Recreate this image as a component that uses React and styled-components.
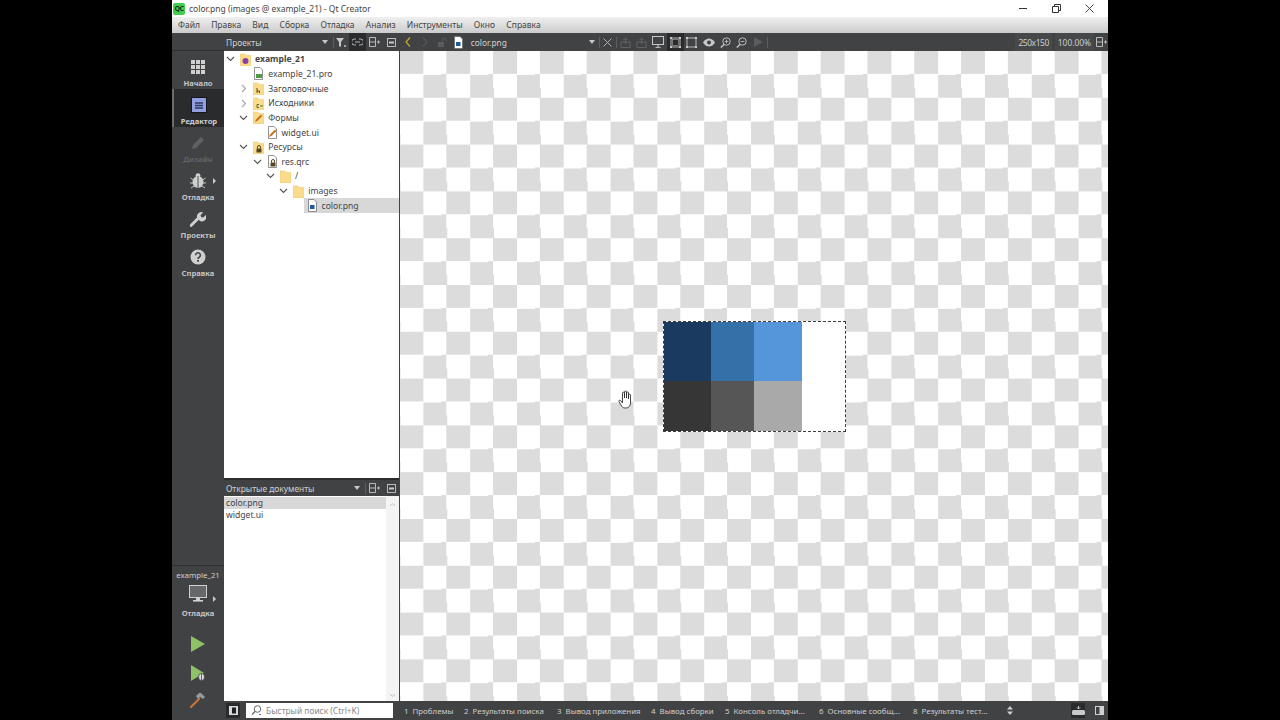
import React from "react";
import styled, { createGlobalStyle } from "styled-components";

const GlobalStyle = createGlobalStyle`
  html, body {
    margin: 0;
    padding: 0;
    background: #000;
    overflow: hidden;
  }
  * { box-sizing: border-box; }
`;

const FONT = `"Noto Sans", "Open Sans", sans-serif`;

const Page = styled.div`
  width: 1280px;
  height: 720px;
  background: #000;
  display: flex;
  justify-content: center;
  font-family: ${FONT};
`;

const Window = styled.div`
  width: 936px;
  height: 720px;
  display: flex;
  flex-direction: column;
  background: #fff;
`;

const TitleBar = styled.div`
  height: 17px;
  display: flex;
  align-items: center;
  background: #fff;
  color: #444;
  font-size: 8.5px;
  padding-left: 1px;
`;

const QtLogo = styled.div`
  width: 12px;
  height: 12px;
  border-radius: 2px;
  background: #41cd52;
  color: #12331a;
  font-size: 7px;
  font-weight: 700;
  line-height: 12px;
  text-align: center;
  letter-spacing: -0.4px;
  margin-right: 4px;
`;

const WindowControls = styled.div`
  margin-left: auto;
  display: flex;
  align-items: center;
  padding-right: 14px;
  gap: 24px;
  svg { display: block; }
`;

const MenuBar = styled.div`
  height: 16px;
  display: flex;
  align-items: center;
  padding: 0 0 1px 6px;
  gap: 11.2px;
  background: linear-gradient(#f0f0f0, #cbcbcb);
  color: #444;
  font-size: 8.5px;
`;

const Body = styled.div`
  flex: 1;
  display: flex;
  min-height: 0;
`;

const Sidebar = styled.div`
  width: 52px;
  display: flex;
  flex-direction: column;
  background: #404244;
`;

const SidebarCap = styled.div`
  height: 18px;
  border-bottom: 1px solid #2e2f30;
`;

const ModeButton = styled.div`
  height: 38px;
  position: relative;
  display: flex;
  flex-direction: column;
  align-items: center;
  padding-top: 7px;
  background: ${(p) => (p.$active ? "#2a2b2c" : "transparent")};
  border-left: ${(p) => (p.$active ? "2px solid #6b6d70" : "0")};
  color: ${(p) => (p.$dim ? "#5f6163" : p.$active ? "#d0d0d0" : "#c4c4c4")};
  font-size: 7.6px;
  font-weight: 700;
  svg { display: block; height: 18px; flex: none; }
`;

const ModeLabel = styled.span`
  margin-top: 2px;
  line-height: 11px;
  white-space: nowrap;
`;

const SmallArrow = styled.span`
  position: absolute;
  right: 8px;
  top: ${(p) => p.$top}px;
  width: 0;
  height: 0;
  border-left: 3px solid #c9c9c9;
  border-top: 3px solid transparent;
  border-bottom: 3px solid transparent;
`;

const SidebarBottom = styled.div`
  margin-top: auto;
  display: flex;
  flex-direction: column;
  align-items: center;
  border-top: 1px solid #2e2f30;
  color: #d0d0d0;
  padding: 4px 0 8px;
  position: relative;
  svg { display: block; }
`;

const KitName = styled.div`
  font-size: 7.8px;
  line-height: 11px;
  margin-bottom: 4px;
`;

const KitMode = styled.div`
  font-size: 7.6px;
  font-weight: 700;
  line-height: 11px;
  margin: 5px 0 10px;
  color: #c4c4c4;
`;

const RunButton = styled.div`
  height: ${(p) => p.$h || 29}px;
  width: 100%;
  display: flex;
  align-items: center;
  justify-content: center;
`;

const Main = styled.div`
  flex: 1;
  min-width: 0;
  display: flex;
  flex-direction: column;
`;

const Columns = styled.div`
  flex: 1;
  display: flex;
  min-height: 0;
`;

const LeftPane = styled.div`
  width: 176px;
  display: flex;
  flex-direction: column;
  background: #fff;
  border-right: 1px solid #404244;
`;

const PaneHeader = styled.div`
  height: ${(p) => p.$h}px;
  flex: none;
  display: flex;
  align-items: center;
  background: #404244;
  color: #d2d2d2;
  font-size: 8.4px;
  padding-left: 2px;
  border-top: ${(p) => (p.$top ? "2px solid #2c2d2e" : "0")};
`;

const HeaderIcons = styled.div`
  margin-left: auto;
  display: flex;
  align-items: center;
  height: 100%;
`;

const HeaderBtn = styled.div`
  width: ${(p) => p.$w || 17}px;
  height: 100%;
  display: flex;
  align-items: center;
  justify-content: center;
  background: ${(p) => (p.$active ? "#2a2b2c" : "transparent")};
  svg { display: block; }
`;

const Sep = styled.div`
  width: 1px;
  height: 11px;
  flex: none;
  background: #5c5e60;
`;

const Tree = styled.div`
  height: 427px;
  flex: none;
  padding-top: 1px;
`;

const TreeRow = styled.div`
  height: 14.65px;
  display: flex;
  align-items: center;
  padding-left: ${(p) => p.$depth * 13.3}px;
  font-size: 8.6px;
  color: #444;
  font-weight: ${(p) => (p.$bold ? 700 : 400)};
`;

const Twisty = styled.div`
  width: 13px;
  flex: none;
  display: flex;
  justify-content: center;
  svg { display: block; }
`;

const RowBody = styled.div`
  flex: 1;
  height: 100%;
  display: flex;
  align-items: center;
  gap: 4px;
  padding-left: 3px;
  background: ${(p) => (p.$selected ? "#d8d8d8" : "transparent")};
  svg { display: block; flex: none; }
`;

const DocList = styled.div`
  flex: 1;
  display: flex;
  min-height: 0;
`;

const DocItems = styled.div`
  flex: 1;
  padding-top: 1px;
`;

const DocItem = styled.div`
  height: 12px;
  line-height: 12px;
  padding-left: 2px;
  font-size: 8.6px;
  color: #444;
  background: ${(p) => (p.$selected ? "#d8d8d8" : "transparent")};
`;

const Scrollbar = styled.div`
  width: 13px;
  display: flex;
  flex-direction: column;
  justify-content: space-between;
  align-items: center;
  background: #f4f4f4;
  padding: 6px 0 3px;
  svg { display: block; }
`;

const Editor = styled.div`
  flex: 1;
  min-width: 0;
  display: flex;
  flex-direction: column;
`;

const EditorBar = styled.div`
  height: 18px;
  flex: none;
  display: flex;
  align-items: center;
  background: #404244;
  color: #d2d2d2;
  font-size: 8.4px;
`;

const FileName = styled.span`
  margin-left: 4px;
  width: 115px;
`;

const ToolBtn = styled.div`
  width: ${(p) => p.$w || 16.7}px;
  height: 100%;
  flex: none;
  display: flex;
  align-items: center;
  justify-content: center;
  background: ${(p) => (p.$active ? "#2a2b2c" : "transparent")};
  svg { display: block; }
`;

const BarSpacer = styled.div`
  flex: 1;
`;

const Readout = styled.span`
  height: 100%;
  display: flex;
  align-items: center;
  padding: 0 3px;
  margin-left: 3px;
  background: #46484a;
  color: #cfcfcf;
  letter-spacing: ${(p) => p.$track || 0}px;
`;

const Canvas = styled.div`
  flex: 1;
  position: relative;
  background-color: #fff;
  background-image: conic-gradient(#dcdcdc 25%, #fff 0 50%, #dcdcdc 0 75%, #fff 0);
  background-size: 46.8px 46.8px;
  background-position: 23.4px 0;
  padding: 270px 0 0 263px;
`;

const PreviewImage = styled.div`
  width: 183px;
  height: 111px;
  display: grid;
  grid-template-columns: 47px 43px 48px 43px;
  grid-template-rows: 59px 50px;
  background: #fff;
  border: 1px dashed #3c3c3c;
`;

const Swatch = styled.div`
  background: ${(p) => p.$color};
`;

const Pointer = styled.div`
  position: absolute;
  left: 218px;
  top: 339px;
  svg { display: block; }
`;

const StatusBar = styled.div`
  height: 19px;
  flex: none;
  display: flex;
  align-items: center;
  background: #404244;
  color: #cfcfcf;
  font-size: 7.9px;
`;

const StatusToggle = styled.div`
  width: 14px;
  height: 15px;
  margin-left: 2px;
  background: ${(p) => (p.$active ? "#2a2b2c" : "transparent")};
  display: flex;
  align-items: center;
  justify-content: center;
  flex: none;
  svg { display: block; }
`;

const SearchBox = styled.div`
  width: 147px;
  height: 15px;
  margin: 0 8px 0 6px;
  background: #fff;
  display: flex;
  align-items: center;
  gap: 4px;
  padding-left: 5px;
  color: #888;
  font-size: 8.4px;
  flex: none;
  svg { display: block; }
`;

const OutputTab = styled.div`
  width: ${(p) => p.$w}px;
  flex: none;
  display: flex;
  gap: 4px;
  padding-left: 3px;
  white-space: nowrap;
`;

const TabsEnd = styled.div`
  margin-left: auto;
  display: flex;
  align-items: center;
  gap: 5px;
  padding-right: 2px;
`;

const Folder = ({ children }) => (
  <svg width="11" height="13" viewBox="0 0 11 13">
    <path d="M0 1h5l1 1.5h5V13H0z" fill="#fbdc8c" stroke="#e9c468" strokeWidth="0.5" />
    {children}
  </svg>
);

const FileIcon = ({ children }) => (
  <svg width="11" height="13" viewBox="0 0 11 13">
    <path d="M1.5.5h5.5l2.5 2.5v9.5h-8z" fill="#fff" stroke="#666" strokeWidth="0.7" />
    {children}
  </svg>
);

const Pencil = () => <path d="M2 11l1-2.5 5-5 1.4 1.4-5 5z" fill="#c9701f" />;

const Lock = () => (
  <g>
    <rect x="3.5" y="7.5" width="5" height="4" fill="#5a4420" />
    <path d="M4.5 7.5V6a1.5 1.5 0 0 1 3 0v1.5" fill="none" stroke="#5a4420" />
  </g>
);

const ImageMark = () => <rect x="3" y="6" width="4.5" height="4" fill="#1f5a9c" />;

const Open = () => (
  <svg width="9" height="6" viewBox="0 0 9 6">
    <path d="M1 1l3.5 3.5L8 1" fill="none" stroke="#555" strokeWidth="1.1" />
  </svg>
);

const Closed = () => (
  <svg width="6" height="9" viewBox="0 0 6 9">
    <path d="M1 1l3.5 3.5L1 8" fill="none" stroke="#a5a5a5" strokeWidth="1.1" />
  </svg>
);

const Row = ({ depth, twisty, bold, selected, icon, children }) => (
  <TreeRow $depth={depth} $bold={bold}>
    <Twisty>{twisty === "open" ? <Open /> : twisty === "closed" ? <Closed /> : null}</Twisty>
    <RowBody $selected={selected}>
      {icon}
      <span>{children}</span>
    </RowBody>
  </TreeRow>
);

const GridIcon = () => (
  <svg width="16" height="18" viewBox="0 0 16 18">
    {[2, 7, 12].flatMap((y) =>
      [1, 6, 11].map((x) => <rect key={`${x}-${y}`} x={x} y={y} width="4" height="4" fill="#d0d0d0" />)
    )}
  </svg>
);

const EditIcon = () => (
  <svg width="16" height="18" viewBox="0 0 16 18">
    <rect x="0.5" y="1.5" width="15" height="15" fill="#8f9fe0" stroke="#16171a" />
    <path d="M4 7h8M4 9.5h8M4 12h8" stroke="#2c3660" strokeWidth="1.3" />
  </svg>
);

const DesignIcon = () => (
  <svg width="16" height="18" viewBox="0 0 16 18">
    <path d="M2 15l1-4 8-8 3 3-8 8z" fill="#5f6163" />
  </svg>
);

const BugIcon = () => (
  <svg width="16" height="18" viewBox="0 0 16 18">
    <ellipse cx="8" cy="10" rx="5.5" ry="6" fill="#cfcfcf" />
    <circle cx="8" cy="3.6" r="2.4" fill="#cfcfcf" />
    <path d="M8 4v12" stroke="#404244" strokeWidth="0.9" />
    <path d="M0.5 6l3 2M15.5 6l-3 2M0 11h3M16 11h-3M1 16l3-2M15 16l-3-2" stroke="#cfcfcf" strokeWidth="0.9" />
  </svg>
);

const WrenchIcon = () => (
  <svg width="16" height="18" viewBox="0 0 16 18">
    <path d="M1 15.5l7.5-7.5" stroke="#cfcfcf" strokeWidth="3" strokeLinecap="round" />
    <path d="M8 9a4.2 4.2 0 0 1 5.2-6.4L10.6 5l.6 2 2 .6 2.5-2.6A4.2 4.2 0 0 1 9 10z" fill="#cfcfcf" />
  </svg>
);

const HelpIcon = () => (
  <svg width="16" height="18" viewBox="0 0 16 18">
    <circle cx="8" cy="9" r="7.5" fill="#cfcfcf" />
    <path d="M5.6 7.2a2.4 2.4 0 1 1 3.6 2.1c-.8.5-1.2.9-1.2 1.7" fill="none" stroke="#404244" strokeWidth="1.6" />
    <rect x="7.1" y="12" width="1.8" height="1.8" fill="#404244" />
  </svg>
);

const MonitorBig = () => (
  <svg width="18" height="18" viewBox="0 0 18 18">
    <rect x="0.5" y="0.5" width="17" height="12" fill="#66696c" stroke="#d0d0d0" />
    <rect x="7" y="13" width="4" height="2" fill="#d0d0d0" />
    <rect x="4" y="15" width="10" height="1.6" fill="#d0d0d0" />
  </svg>
);

const Play = () => (
  <svg width="14" height="16" viewBox="0 0 14 16">
    <path d="M0 0l14 8-14 8z" fill="#8fc169" />
  </svg>
);

const DebugPlay = () => (
  <svg width="16" height="18" viewBox="0 0 16 18">
    <path d="M1 1l13 8-13 8z" fill="#8fc169" />
    <ellipse cx="11.5" cy="13" rx="3" ry="3.6" fill="#e0e0e0" stroke="#404244" strokeWidth="0.8" />
    <path d="M11.5 9.5v7" stroke="#404244" strokeWidth="0.8" />
  </svg>
);

const Hammer = () => (
  <svg width="18" height="18" viewBox="0 0 18 18">
    <path d="M2 16l8-8" stroke="#c8743a" strokeWidth="2.2" strokeLinecap="round" />
    <path d="M7 5l3-3 2 0 4 4-2 2-3-2-2 2z" fill="#9a9a9a" />
  </svg>
);

const Filter = () => (
  <svg width="11" height="11" viewBox="0 0 11 11">
    <path d="M0 1h8L5 5v5L3 9V5z" fill="#c8c8c8" />
    <circle cx="9" cy="9" r="1" fill="#c8c8c8" />
  </svg>
);

const LinkIcon = () => (
  <svg width="11" height="8" viewBox="0 0 11 8">
    <path d="M4 1H2.5a3 3 0 0 0 0 6H4M7 1h1.5a3 3 0 0 1 0 6H7M3 4h5" fill="none" stroke="#c8c8c8" strokeWidth="0.9" />
  </svg>
);

const SplitIcon = () => (
  <svg width="11" height="10" viewBox="0 0 11 10">
    <path d="M.5.5h6v9h-6zM.5 5h6M8 5h3M9.5 3.5v3" fill="none" stroke="#c8c8c8" strokeWidth="0.9" />
  </svg>
);

const CloseBox = () => (
  <svg width="9" height="9" viewBox="0 0 9 9">
    <rect x="0.5" y="0.5" width="8" height="8" fill="none" stroke="#c8c8c8" strokeWidth="0.9" />
    <rect x="2" y="3.5" width="5" height="2" fill="#c8c8c8" />
  </svg>
);

const DropArrow = () => (
  <svg width="6" height="4" viewBox="0 0 6 4">
    <path d="M0 0h6L3 4z" fill="#c8c8c8" />
  </svg>
);

const Nav = ({ d, c }) => (
  <svg width="6" height="10" viewBox="0 0 6 10">
    <path d={d} fill="none" stroke={c} strokeWidth="1.2" />
  </svg>
);

const DimLock = () => (
  <svg width="10" height="10" viewBox="0 0 10 10">
    <rect x="1" y="5" width="6" height="5" fill="#5a5c5e" />
    <path d="M5 5V3a2 2 0 0 1 4 0v1" fill="none" stroke="#5a5c5e" />
  </svg>
);

const XIcon = ({ c = "#b8b8b8", s = 9 }) => (
  <svg width={s} height={s} viewBox="0 0 9 9">
    <path d="M.5.5l8 8M8.5.5l-8 8" stroke={c} strokeWidth="0.9" />
  </svg>
);

const Export = () => (
  <svg width="11" height="11" viewBox="0 0 11 11">
    <path d="M1 5h9v5.5H1zM5.5 7V1M3.5 3l2-2 2 2" fill="none" stroke="#5f6163" />
  </svg>
);

const SmallMonitor = () => (
  <svg width="12" height="12" viewBox="0 0 12 12">
    <rect x="0.5" y="0.5" width="11" height="8" fill="#404244" stroke="#c8c8c8" />
    <path d="M6 9v2M3.5 11.4h5" stroke="#c8c8c8" />
  </svg>
);

const FitIcon = ({ inner }) => (
  <svg width="11" height="11" viewBox="0 0 11 11">
    <rect x="1" y="1" width="9" height="9" fill="none" stroke="#c8c8c8" strokeWidth="0.9" />
    {inner ? <rect x="2.5" y="2.5" width="6" height="6" fill="none" stroke="#c8c8c8" strokeWidth="0.5" /> : null}
    {[[0, 0], [9, 0], [0, 9], [9, 9]].map(([x, y]) => (
      <rect key={`${x}${y}`} x={x} y={y} width="2" height="2" fill="#c8c8c8" />
    ))}
  </svg>
);

const Eye = () => (
  <svg width="12" height="9" viewBox="0 0 12 9">
    <path d="M0 4.5C2 1.5 4 .5 6 .5s4 1 6 4c-2 3-4 4-6 4s-4-1-6-4z" fill="#c8c8c8" />
    <circle cx="6" cy="4.5" r="2" fill="#404244" />
  </svg>
);

const Zoom = ({ plus }) => (
  <svg width="11" height="11" viewBox="0 0 11 11">
    <circle cx="6.5" cy="4.5" r="3.7" fill="none" stroke="#c8c8c8" strokeWidth="0.9" />
    <path d="M4 7.5L.8 10.5" stroke="#c8c8c8" strokeWidth="1.4" />
    <path d={plus ? "M4.7 4.5h3.6M6.5 2.7v3.6" : "M4.7 4.5h3.6"} stroke="#c8c8c8" strokeWidth="0.8" />
  </svg>
);

const DimPlay = () => (
  <svg width="9" height="10" viewBox="0 0 9 10">
    <path d="M0 0l9 5-9 5z" fill="#5a5c5e" />
  </svg>
);

const PanelLeft = () => (
  <svg width="9" height="9" viewBox="0 0 9 9">
    <rect x="0" y="0" width="9" height="9" fill="#d8d8d8" />
    <rect x="3" y="1.5" width="4" height="6" fill="#1e1f20" />
  </svg>
);

const SearchGlass = () => (
  <svg width="11" height="11" viewBox="0 0 11 11">
    <circle cx="6.5" cy="4" r="3.3" fill="none" stroke="#666" />
    <path d="M4 6.5L1 9.5" stroke="#666" strokeWidth="1.3" />
    <path d="M8 9.5h2" stroke="#666" />
  </svg>
);

const UpDown = () => (
  <svg width="6" height="9" viewBox="0 0 6 9">
    <path d="M3 0l3 3.5H0zM3 9L0 5.5h6z" fill="#cfcfcf" />
  </svg>
);

const Drive = () => (
  <svg width="13" height="10" viewBox="0 0 13 10">
    <rect x="0" y="4" width="13" height="5" rx="1.5" fill="#c8c8c8" />
    <path d="M6.5 0v3M5 1.5l1.5 1.5L8 1.5" fill="none" stroke="#c8c8c8" />
  </svg>
);

const PanelRight = () => (
  <svg width="9" height="9" viewBox="0 0 9 9">
    <rect x="0.5" y="0.5" width="8" height="8" fill="#404244" stroke="#d0d0d0" />
    <rect x="4.5" y="0.5" width="4" height="8" fill="#d0d0d0" />
  </svg>
);

const HandPointer = () => (
  <svg width="15" height="19" viewBox="0 0 15 19">
    <path
      d="M4.5 10V3.2a1 1 0 0 1 2 0V8 2a1 1 0 0 1 2 0v6-5a1 1 0 0 1 2 0v6-3.8a1 1 0 0 1 2 0V13c0 3-2 5-4.5 5H7c-2 0-3-1-4-3L1 11.6c-.6-1.1.9-2 1.7-1L4.5 13z"
      fill="#fff"
      stroke="#333"
      strokeWidth="0.9"
      strokeLinejoin="round"
    />
  </svg>
);

const menus = ["Файл", "Правка", "Вид", "Сборка", "Отладка", "Анализ", "Инструменты", "Окно", "Справка"];

const tabs = [
  ["1", "Проблемы", 60],
  ["2", "Результаты поиска", 93],
  ["3", "Вывод приложения", 94],
  ["4", "Вывод сборки", 74],
  ["5", "Консоль отладчи...", 94],
  ["6", "Основные сообщ...", 94],
  ["8", "Результаты тест...", 92],
];

const swatches = ["#1a3a5f", "#3670a8", "#5595d9", "#fff", "#363636", "#565656", "#a9a9a9", "#fff"];

export default function App() {
  return (
    <Page>
      <GlobalStyle />
      <Window>
        <TitleBar>
          <QtLogo>QC</QtLogo>
          color.png (images @ example_21) - Qt Creator
          <WindowControls>
            <svg width="9" height="9" viewBox="0 0 9 9"><path d="M0 4.5h8" stroke="#333" /></svg>
            <svg width="9" height="9" viewBox="0 0 9 9"><path d="M.5 2.5h6v6h-6zM2.5 2.5v-2h6v6h-2" fill="none" stroke="#333" /></svg>
            <XIcon c="#333" s={9} />
          </WindowControls>
        </TitleBar>
        <MenuBar>
          {menus.map((m) => (
            <span key={m}>{m}</span>
          ))}
        </MenuBar>
        <Body>
          <Sidebar>
            <SidebarCap />
            <ModeButton><GridIcon /><ModeLabel>Начало</ModeLabel></ModeButton>
            <ModeButton $active><EditIcon /><ModeLabel>Редактор</ModeLabel></ModeButton>
            <ModeButton $dim><DesignIcon /><ModeLabel>Дизайн</ModeLabel></ModeButton>
            <ModeButton><BugIcon /><ModeLabel>Отладка</ModeLabel><SmallArrow $top={13} /></ModeButton>
            <ModeButton><WrenchIcon /><ModeLabel>Проекты</ModeLabel></ModeButton>
            <ModeButton><HelpIcon /><ModeLabel>Справка</ModeLabel></ModeButton>
            <SidebarBottom>
              <KitName>example_21</KitName>
              <MonitorBig />
              <KitMode>Отладка</KitMode>
              <SmallArrow $top={30} />
              <RunButton><Play /></RunButton>
              <RunButton><DebugPlay /></RunButton>
              <RunButton $h={25}><Hammer /></RunButton>
            </SidebarBottom>
          </Sidebar>
          <Main>
            <Columns>
              <LeftPane>
                <PaneHeader $h={18}>
                  Проекты
                  <HeaderIcons>
                    <DropArrow />
                    <HeaderBtn $w={5} />
                    <Sep />
                    <HeaderBtn $w={15}><Filter /></HeaderBtn>
                    <HeaderBtn $w={17} $active><LinkIcon /></HeaderBtn>
                    <HeaderBtn><SplitIcon /></HeaderBtn>
                    <HeaderBtn $w={16}><CloseBox /></HeaderBtn>
                  </HeaderIcons>
                </PaneHeader>
                <Tree>
                  <Row depth={0} twisty="open" bold icon={<Folder><circle cx="5.5" cy="8" r="3" fill="#8a3fa8" /></Folder>}>example_21</Row>
                  <Row depth={1} icon={<FileIcon><rect x="3" y="7" width="6" height="4" fill="#4f9a45" /></FileIcon>}>example_21.pro</Row>
                  <Row depth={1} twisty="closed" icon={<Folder><path d="M4 6v5M4 9h2.5v2" fill="none" stroke="#6b4a10" /></Folder>}>Заголовочные</Row>
                  <Row depth={1} twisty="closed" icon={<Folder><path d="M6 7.5H4v3h2M7 9h3" fill="none" stroke="#5a6b30" /></Folder>}>Исходники</Row>
                  <Row depth={1} twisty="open" icon={<Folder><Pencil /></Folder>}>Формы</Row>
                  <Row depth={2} icon={<FileIcon><Pencil /></FileIcon>}>widget.ui</Row>
                  <Row depth={1} twisty="open" icon={<Folder><Lock /></Folder>}>Ресурсы</Row>
                  <Row depth={2} twisty="open" icon={<FileIcon><Lock /></FileIcon>}>res.qrc</Row>
                  <Row depth={3} twisty="open" icon={<Folder />}>/</Row>
                  <Row depth={4} twisty="open" icon={<Folder />}>images</Row>
                  <Row depth={5} selected icon={<FileIcon><ImageMark /></FileIcon>}>color.png</Row>
                </Tree>
                <PaneHeader $h={18} $top>
                  Открытые документы
                  <HeaderIcons>
                    <DropArrow />
                    <HeaderBtn $w={5} />
                    <Sep />
                    <HeaderBtn><SplitIcon /></HeaderBtn>
                    <HeaderBtn $w={16}><CloseBox /></HeaderBtn>
                  </HeaderIcons>
                </PaneHeader>
                <DocList>
                  <DocItems>
                    <DocItem $selected>color.png</DocItem>
                    <DocItem>widget.ui</DocItem>
                  </DocItems>
                  <Scrollbar>
                    <svg width="7" height="5" viewBox="0 0 7 5"><path d="M1 4l2.5-2.5L6 4" fill="none" stroke="#c4c4c4" /></svg>
                    <svg width="7" height="5" viewBox="0 0 7 5"><path d="M1 1l2.5 2.5L6 1" fill="none" stroke="#c4c4c4" /></svg>
                  </Scrollbar>
                </DocList>
              </LeftPane>
              <Editor>
                <EditorBar>
                  <ToolBtn><Nav d="M5 .5L1 5l4 4.5" c="#c9a92e" /></ToolBtn>
                  <ToolBtn><Nav d="M1 .5L5 5 1 9.5" c="#55575a" /></ToolBtn>
                  <ToolBtn><DimLock /></ToolBtn>
                  <ToolBtn><FileIcon><ImageMark /></FileIcon></ToolBtn>
                  <FileName>color.png</FileName>
                  <ToolBtn $w={13}><DropArrow /></ToolBtn>
                  <Sep />
                  <ToolBtn $w={16}><XIcon /></ToolBtn>
                  <Sep />
                  <ToolBtn><Export /></ToolBtn>
                  <ToolBtn><Export /></ToolBtn>
                  <ToolBtn><SmallMonitor /></ToolBtn>
                  <ToolBtn $active><FitIcon inner /></ToolBtn>
                  <ToolBtn><FitIcon /></ToolBtn>
                  <ToolBtn><Eye /></ToolBtn>
                  <ToolBtn><Zoom plus /></ToolBtn>
                  <ToolBtn><Zoom /></ToolBtn>
                  <ToolBtn><DimPlay /></ToolBtn>
                  <Sep />
                  <BarSpacer />
                  <Readout $track={-0.4}>250x150</Readout>
                  <Readout>100.00%</Readout>
                  <ToolBtn $w={14}><SplitIcon /></ToolBtn>
                </EditorBar>
                <Canvas>
                  <PreviewImage>
                    {swatches.map((c, i) => (
                      <Swatch key={i} $color={c} />
                    ))}
                  </PreviewImage>
                  <Pointer><HandPointer /></Pointer>
                </Canvas>
              </Editor>
            </Columns>
            <StatusBar>
              <StatusToggle $active><PanelLeft /></StatusToggle>
              <SearchBox><SearchGlass />Быстрый поиск (Ctrl+K)</SearchBox>
              {tabs.map(([n, label, w]) => (
                <OutputTab key={n} $w={w}><span>{n}</span><span>{label}</span></OutputTab>
              ))}
              <ToolBtn $w={16}><UpDown /></ToolBtn>
              <TabsEnd>
                <StatusToggle $active><Drive /></StatusToggle>
                <StatusToggle><PanelRight /></StatusToggle>
              </TabsEnd>
            </StatusBar>
          </Main>
        </Body>
      </Window>
    </Page>
  );
}
